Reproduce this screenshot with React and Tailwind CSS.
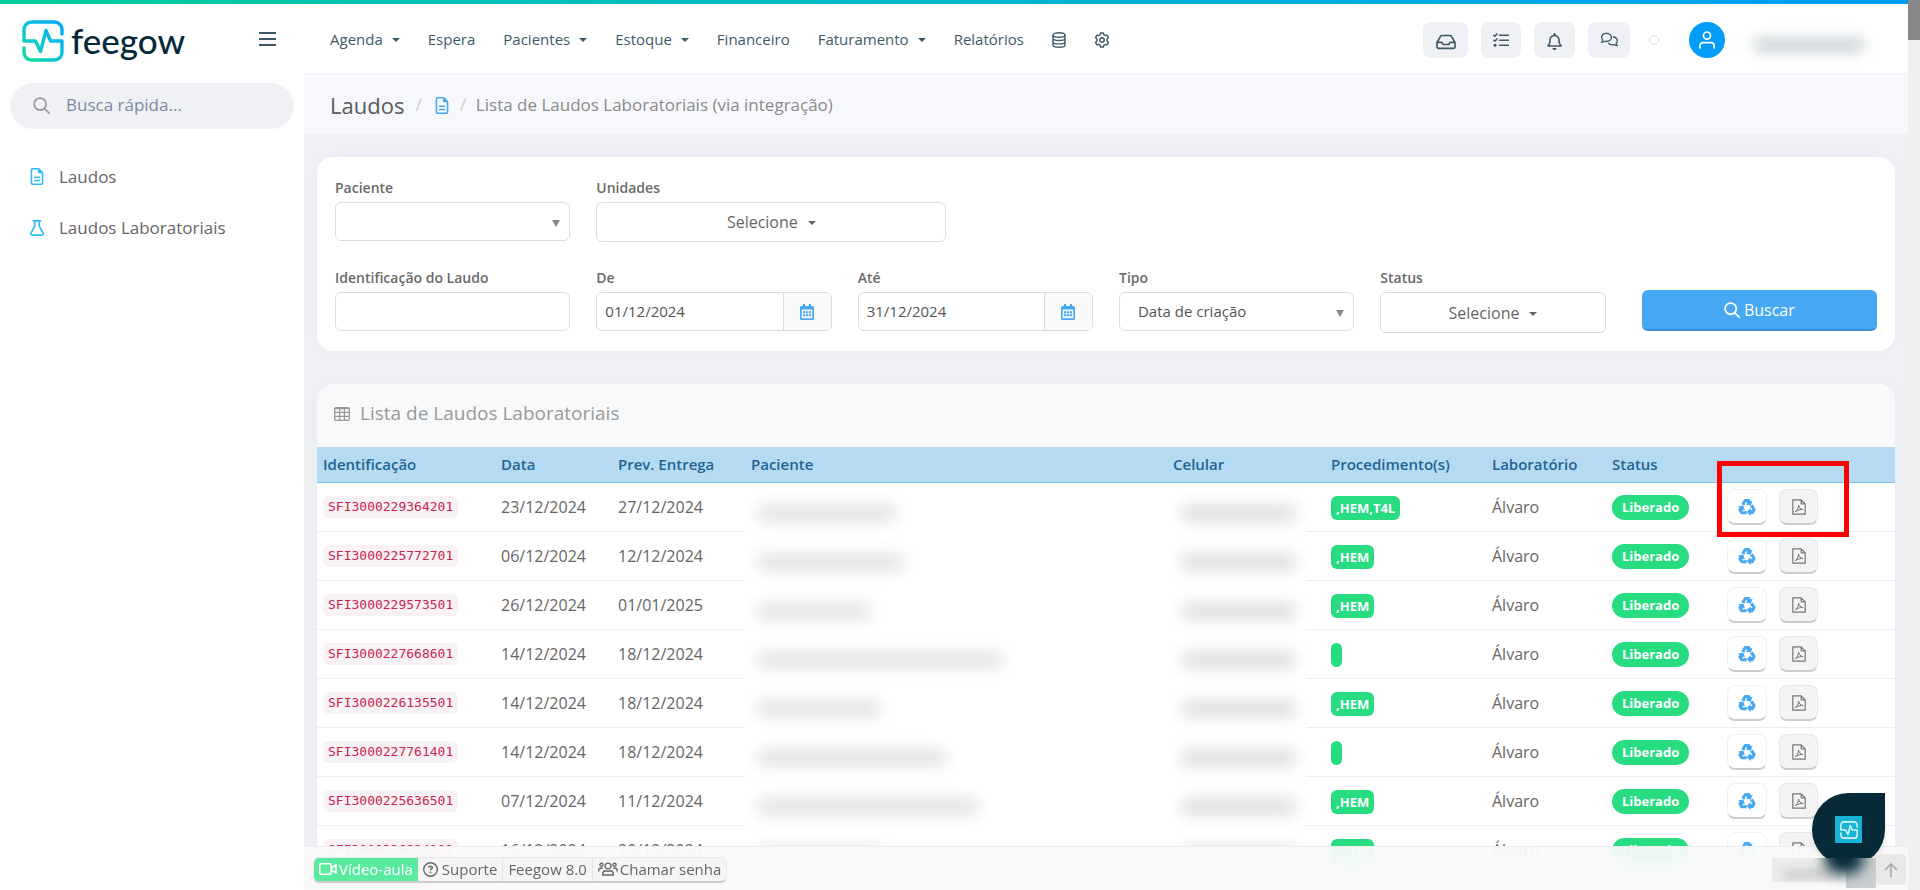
import { FaRegFileLines, FaRegBell, FaRegComments, FaRegCircleQuestion } from 'react-icons/fa6';

const menu = [
  { label: 'Agenda', caret: true },
  { label: 'Espera' },
  { label: 'Pacientes', caret: true },
  { label: 'Estoque', caret: true },
  { label: 'Financeiro' },
  { label: 'Faturamento', caret: true },
  { label: 'Relatórios' },
];

const laudos = [
  { id: 'SFI3000229364201', data: '23/12/2024', entrega: '27/12/2024', nome: 140, proc: ',HEM,T4L' },
  { id: 'SFI3000225772701', data: '06/12/2024', entrega: '12/12/2024', nome: 148, proc: ',HEM' },
  { id: 'SFI3000229573501', data: '26/12/2024', entrega: '01/01/2025', nome: 114, proc: ',HEM' },
  { id: 'SFI3000227668601', data: '14/12/2024', entrega: '18/12/2024', nome: 246, proc: '' },
  { id: 'SFI3000226135501', data: '14/12/2024', entrega: '18/12/2024', nome: 124, proc: ',HEM' },
  { id: 'SFI3000227761401', data: '14/12/2024', entrega: '18/12/2024', nome: 190, proc: '' },
  { id: 'SFI3000225636501', data: '07/12/2024', entrega: '11/12/2024', nome: 222, proc: ',HEM' },
  { id: 'SFI3000226924101', data: '16/12/2024', entrega: '20/12/2024', nome: 130, proc: ',HEM' },
];

function Caret({ className = '' }) {
  return (
    <svg viewBox="0 0 8 4" className={`h-1 w-2 fill-current ${className}`}>
      <path d="M0 0h8L4 4z" />
    </svg>
  );
}

function PulseMark({ className, stroke, width = 3.4 }) {
  return (
    <svg viewBox="0 0 42 42" className={className} fill="none" stroke={stroke} strokeWidth={width} strokeLinecap="round" strokeLinejoin="round">
      <defs>
        <linearGradient id="marca" x1="0" y1="1" x2="1" y2="0">
          <stop offset="0" stopColor="#10dc9c" />
          <stop offset="0.5" stopColor="#0cc4dc" />
          <stop offset="1" stopColor="#00a8fc" />
        </linearGradient>
      </defs>
      <path d="M40 14V9.500A7.500 7.500 0 0 0 32.500 2h-23A7.500 7.500 0 0 0 2 9.500V21h11.500l5 10.500L24 10.500l4.500 10.500H40v11.500a7.500 7.500 0 0 1-7.500 7.500h-23A7.500 7.500 0 0 1 2 32.500V28" />
    </svg>
  );
}

function SearchIcon({ className, width = 2 }) {
  return (
    <svg viewBox="0 0 18 18" className={className} fill="none" stroke="currentColor" strokeWidth={width} strokeLinecap="round">
      <circle cx="7.500" cy="7.500" r="6.300" />
      <path d="M12.200 12.200 17 17" />
    </svg>
  );
}

function FlaskIcon({ className }) {
  return (
    <svg viewBox="0 0 14 16" className={className} fill="none" stroke="currentColor" strokeWidth="1.600" strokeLinecap="round" strokeLinejoin="round">
      <path d="M3.300.9h7.400M4.700 1v5.200L1 13c-.5 1.100 0 2.100 1.100 2.100h9.800c1.100 0 1.600-1 1.100-2.100L9.300 6.200V1" />
    </svg>
  );
}

function DatabaseIcon() {
  return (
    <svg viewBox="0 0 14 16" className="h-4 w-3.5" fill="none" stroke="currentColor" strokeWidth="1.400">
      <ellipse cx="7" cy="3" rx="6" ry="2.200" />
      <path d="M1 3v10c0 1.200 2.700 2.200 6 2.200s6-1 6-2.200V3M1 6.300c0 1.200 2.700 2.200 6 2.200s6-1 6-2.200M1 9.700c0 1.200 2.700 2.200 6 2.200s6-1 6-2.200" />
    </svg>
  );
}

function GearIcon() {
  return (
    <svg viewBox="0 0 16 16" className="size-4" fill="none" stroke="currentColor" strokeWidth="1.400" strokeLinejoin="round">
      <path d="M6.600 1h2.800l.5 1.900 1.300.8 1.900-.6 1.400 2.500L13.100 7v2l1.400 1.400-1.400 2.500-1.900-.6-1.300.8-.5 1.900H6.600l-.5-1.900-1.300-.8-1.900.6-1.400-2.500L2.900 9V7L1.500 5.600l1.400-2.500 1.900.6 1.300-.8z" />
      <circle cx="8" cy="8" r="2.200" />
    </svg>
  );
}

function InboxIcon() {
  return (
    <svg viewBox="0 0 20 16" className="h-4 w-5" fill="none" stroke="currentColor" strokeWidth="1.700" strokeLinejoin="round">
      <path d="M1 8.500 4.500 2.300C4.800 1.700 5.300 1.500 6 1.500h8c.7 0 1.200.2 1.500.8L19 8.500v4.300c0 .9-.6 1.500-1.500 1.500h-15C1.600 14.300 1 13.700 1 12.800zM1.200 8.300h4.600L7.300 10.500h5.400l1.500-2.200h4.600" />
    </svg>
  );
}

function ChecklistIcon() {
  return (
    <svg viewBox="0 0 16 14" className="h-3.5 w-4" fill="none" stroke="currentColor" strokeWidth="1.500" strokeLinecap="round" strokeLinejoin="round">
      <path d="M6.500 2.300h9M6.500 7.300h9M6.500 12.300h9M.8 2.300l1.100 1 2-2.400M.8 7.300l1.100 1 2-2.400" />
      <circle cx="2" cy="12.300" r=".8" fill="currentColor" />
    </svg>
  );
}

function CalendarIcon() {
  return (
    <svg viewBox="0 0 14 16" className="h-4 w-3.5" fill="none">
      <path d="M4 0v3M10 0v3" stroke="currentColor" strokeWidth="2" />
      <path d="M0 3.500A1.500 1.500 0 0 1 1.500 2h11A1.500 1.500 0 0 1 14 3.500v11a1.500 1.500 0 0 1-1.500 1.500h-11A1.500 1.500 0 0 1 0 14.500zM1.700 5.500v8.800h10.600V5.500z" fill="currentColor" fillRule="evenodd" />
      <path d="M3 8.300h8M3 11.300h8" stroke="currentColor" strokeWidth="2" strokeDasharray="2.200 .7" />
    </svg>
  );
}

function TableIcon() {
  return (
    <svg viewBox="0 0 16 14" className="h-3.5 w-4" fill="none" stroke="currentColor" strokeWidth="1.300">
      <rect x=".7" y=".7" width="14.600" height="12.600" rx="1.200" />
      <path d="M.7 1.500h14.600M.7 5.300h14.600M.7 9.300h14.600M5.600 1v12M10.400 1v12" />
    </svg>
  );
}

// three chunky arrows, one drawn and turned twice
function RecycleIcon() {
  return (
    <svg viewBox="0 0 16 16" className="size-[18px] fill-current">
      {[0, 120, 240].map((turn) => (
        <path key={turn} transform={`rotate(${turn} 8 8.600)`} d="M3 5.400 5.200 1.700C5.500 1.200 6 .9 6.700.9h2.700c.6 0 1 .2 1.300.7l.8 1.400 1.500-.8-1.600 4.500-4.700-.9 1.500-.9L7.200 3.200 5.600 6.900z" />
      ))}
    </svg>
  );
}

function PdfIcon() {
  return (
    <svg viewBox="0 0 14 16" className="h-4 w-3.5" fill="none" stroke="currentColor" strokeWidth="1.200" strokeLinejoin="round">
      <path d="M.8.800h8.400l4 4v10.400H.8zM9.200.800v4h4" />
      <path strokeWidth="1" d="M3.100 12.700c1.800-1 3.400-3.600 3.500-6.700.3 2.400 1.800 4.300 4.500 4.600-2.600-.3-5.400.4-8 2.100z" />
    </svg>
  );
}

function VideoIcon() {
  return (
    <svg viewBox="0 0 18 12" className="h-3 w-[18px]" fill="none" stroke="currentColor" strokeWidth="1.600" strokeLinejoin="round">
      <rect x=".8" y=".8" width="11.400" height="10.400" rx="1" />
      <path d="M12.500 5 17 1.800v8.400L12.500 7z" />
    </svg>
  );
}

function GroupIcon() {
  return (
    <svg viewBox="0 0 20 14" className="h-3.5 w-5" fill="none" stroke="currentColor" strokeWidth="1.400" strokeLinecap="round">
      <circle cx="10" cy="4" r="2.900" />
      <circle cx="3.500" cy="2.800" r="1.600" />
      <circle cx="16.500" cy="2.800" r="1.600" />
      <path d="M4.800 13v-1c0-2 1.400-3.200 3-3.200.8 0 1.200.4 2.200.4s1.400-.4 2.200-.4c1.600 0 3 1.200 3 3.200v1zM.8 9V7.800C.8 6.700 1.600 6.200 2.500 6.200h1.700M19.200 9V7.800c0-1.100-.8-1.600-1.700-1.600h-1.700" />
    </svg>
  );
}

function Sidebar() {
  return (
    <aside className="w-76 shrink-0 bg-white pt-1">
      <div className="flex h-[79px] items-start pt-4 pr-7 pl-[22px]">
        <PulseMark className="size-[42px]" stroke="url(#marca)" />
        <span className="mt-0.5 ml-[7px] font-['Lato'] text-[35px] leading-9 font-medium text-[#06293a]">feegow</span>
        <button aria-label="Menu" className="mt-3 ml-auto flex w-[17px] flex-col gap-1 text-[#3e5a68]">
          <span className="h-0.5 bg-current" />
          <span className="h-0.5 bg-current" />
          <span className="h-0.5 bg-current" />
        </button>
      </div>
      <label className="mx-2.5 flex h-[46px] items-center gap-4 rounded-full bg-[#f0f1f5] pb-0.5 pl-[23px] text-[#999]">
        <SearchIcon className="size-[17px] shrink-0" width={1.8} />
        <input
          type="text"
          aria-label="Busca rápida"
          placeholder="Busca rápida..."
          className="min-w-0 flex-1 bg-transparent text-[17px] outline-none placeholder:text-[#7a8ba6]"
        />
      </label>
      <nav className="mt-[22px] text-[17px] text-[#666]">
        <a href="#laudos" className="flex h-[51px] items-center gap-[15px] pl-[30px]">
          <FaRegFileLines className="w-3.5 text-[#2fbcfb]" />
          Laudos
        </a>
        <a href="#laboratoriais" className="flex h-[51px] items-center gap-[15px] pl-[30px]">
          <FlaskIcon className="h-4 w-3.5 text-[#2fbcfb]" />
          Laudos Laboratoriais
        </a>
      </nav>
    </aside>
  );
}

function Topbar() {
  return (
    <header className="flex h-[69px] shrink-0 items-center bg-white pt-0.5 pr-[43px] pl-[26px] text-[#3e5a68]">
      <nav className="flex items-center gap-7 text-[15px]">
        {menu.map((item) => (
          <a key={item.label} href="#menu" className="flex items-center gap-[9px]">
            {item.label}
            {item.caret && <Caret />}
          </a>
        ))}
        <a href="#base" aria-label="Base"><DatabaseIcon /></a>
        <a href="#config" aria-label="Configurações"><GearIcon /></a>
      </nav>
      <div className="ml-auto flex items-center">
        <div className="flex gap-[13px]">
          <button aria-label="Caixa" className="flex h-9 w-[45px] items-center justify-center rounded-lg bg-[#f0f1f5] pt-1"><InboxIcon /></button>
          <button aria-label="Tarefas" className="flex h-9 w-10 items-center justify-center rounded-lg bg-[#f0f1f5]"><ChecklistIcon /></button>
          <button aria-label="Avisos" className="flex h-9 w-[41px] items-center justify-center rounded-lg bg-[#f0f1f5] pt-1 text-[17px]"><FaRegBell /></button>
          <button aria-label="Chat" className="flex h-9 w-[42px] items-center justify-center rounded-lg bg-[#f0f1f5] text-[17px]"><FaRegComments /></button>
        </div>
        <span className="ml-[19px] size-2.5 rounded-full border border-[#ddd]" />
        <button aria-label="Usuário" className="ml-[30px] flex size-9 items-center justify-center rounded-full bg-[#009cf8] text-white">
          <svg viewBox="0 0 18 20" className="h-5 w-4" fill="none" stroke="currentColor" strokeWidth="1.900" strokeLinecap="round">
            <circle cx="9" cy="5" r="4" />
            <path d="M1 19v-2.500A3.500 3.500 0 0 1 4.500 13h9a3.500 3.500 0 0 1 3.500 3.500V19" />
          </svg>
        </button>
        <span className="mt-2.5 ml-7 h-4 w-[112px] rounded-full bg-[#3e5a68]/25 blur-[7px]" />
      </div>
    </header>
  );
}

const campo = 'w-full rounded-md border border-[#ddd] bg-white';

function Campo({ id, label, className = '', children }) {
  return (
    <div className={className}>
      <label htmlFor={id} className="mb-1 block text-sm leading-5 font-semibold text-[#6a6a6a]">{label}</label>
      {children}
    </div>
  );
}

function Lista({ id, children }) {
  return (
    <div className="relative">
      <select id={id} className={`${campo} h-[39px] appearance-none pl-[18px] text-[15px] text-[#555]`}>
        {children}
      </select>
      <svg viewBox="0 0 8 7" className="pointer-events-none absolute top-[18px] right-2.5 h-[7px] w-2 fill-[#888]">
        <path d="M0 0h8L4 7z" />
      </svg>
    </div>
  );
}

function Multi({ id, className }) {
  return (
    <button id={id} className={`flex items-center justify-center gap-2.5 rounded-md border border-[#ddd] bg-white text-base text-[#666] ${className}`}>
      Selecione
      <Caret className="mt-0.5" />
    </button>
  );
}

function CampoData({ id, value }) {
  return (
    <div className="flex h-[39px] overflow-hidden rounded-md border border-[#ddd]">
      <input id={id} type="text" defaultValue={value} className="min-w-0 flex-1 px-2 text-[15px] text-[#555] outline-none" />
      <button aria-label="Abrir calendário" className="flex w-12 items-center justify-center border-l border-[#ddd] bg-[#fafafa] text-[#46a8f4]">
        <CalendarIcon />
      </button>
    </div>
  );
}

function Filtros() {
  return (
    <form className="grid grid-cols-6 gap-x-[26px] rounded-2xl bg-white px-[18px] pt-[21px] pb-[18px] shadow-[0_0_16px_rgba(40,50,90,0.03)]">
      <Campo id="paciente" label="Paciente">
        <Lista id="paciente"><option></option></Lista>
      </Campo>
      <Campo id="unidades" label="Unidades" className="col-span-5">
        <Multi id="unidades" className="h-10 w-[350px]" />
      </Campo>
      <div className="col-span-6 h-[26px]" />
      <Campo id="ident" label="Identificação do Laudo">
        <input id="ident" type="text" className={`${campo} h-[39px] px-2 text-[15px]`} />
      </Campo>
      <Campo id="de" label="De"><CampoData id="de" value="01/12/2024" /></Campo>
      <Campo id="ate" label="Até"><CampoData id="ate" value="31/12/2024" /></Campo>
      <Campo id="tipo" label="Tipo">
        <Lista id="tipo"><option>Data de criação</option></Lista>
      </Campo>
      <Campo id="status" label="Status" className="pr-2.5"><Multi id="status" className="h-[41px] w-full" /></Campo>
      <button type="button" className="mt-[22px] flex h-[41px] items-center justify-center gap-1 rounded-md border-b-2 border-[#3a92d6] bg-[#46a8f2] text-base text-white">
        <SearchIcon className="size-4" />
        Buscar
      </button>
    </form>
  );
}

function Tabela() {
  return (
    <section className="relative mt-[33px] rounded-t-2xl bg-white shadow-[0_0_16px_rgba(40,50,90,0.03)]">
      <h2 className="flex h-[63px] items-center gap-2.5 rounded-t-2xl bg-[#f8f9fb] pb-1 pl-[17px] text-[19px] text-[#999]">
        <TableIcon />
        Lista de Laudos Laboratoriais
      </h2>
      <table className="w-full table-fixed border-separate border-spacing-0 text-base text-[#666]">
        <colgroup>
          <col className="w-[178px]" />
          <col className="w-[117px]" />
          <col className="w-[133px]" />
          <col />
          <col className="w-[139px]" />
          <col className="w-[180px]" />
          <col className="w-[120px]" />
          <col className="w-[115px]" />
          <col className="w-[174px]" />
        </colgroup>
        <thead>
          <tr className="h-9 bg-[#b5daf2] text-left text-[15px] text-[#1f6496] [&>th]:border-b [&>th]:border-[#7cbce8] [&>th]:px-1.5 [&>th]:font-semibold">
            <th>Identificação</th>
            <th>Data</th>
            <th>Prev. Entrega</th>
            <th>Paciente</th>
            <th>Celular</th>
            <th><span className="pl-[19px]">Procedimento(s)</span></th>
            <th>Laboratório</th>
            <th>Status</th>
            <th aria-label="Ações" />
          </tr>
        </thead>
        <tbody>
          {laudos.map((l) => (
            <tr key={l.id} className="h-[49px] [&>td]:border-b [&>td]:border-[#eee] [&>td]:px-1.5">
              <td>
                <code className="block h-[22px] w-[135px] rounded-md bg-[#f9f2f4] px-[5px] font-['DejaVu_Sans_Mono',monospace] text-[13px] leading-[22px] text-[#c7254e]">{l.id}</code>
              </td>
              <td>{l.data}</td>
              <td>{l.entrega}</td>
              <td className="border-white!">
                <div className="mt-3 ml-1.5 h-4 rounded-full bg-black/12 blur-[8px]" style={{ width: l.nome }} />
              </td>
              <td className="border-white!">
                <div className="mt-3 ml-2 h-4 w-[116px] rounded-full bg-black/14 blur-[8px]" />
              </td>
              <td>
                <span className="ml-[19px] inline-block h-6 min-w-[11px] rounded-md bg-[#28dc82] px-[5px] align-middle text-[13px] leading-6 font-bold text-white">{l.proc}</span>
              </td>
              <td>Álvaro</td>
              <td>
                <span className="inline-block h-[25px] rounded-full bg-[#28dc82] px-2.5 align-middle text-[13px] leading-[25px] font-bold text-white">Liberado</span>
              </td>
              <td>
                <div className="flex gap-3">
                  <button aria-label="Sincronizar" className="flex h-9 w-10 items-center justify-center rounded-lg border border-b-2 border-[#f1f1f1] border-b-[#ccc] bg-white text-[#46a8f4]"><RecycleIcon /></button>
                  <button aria-label="Abrir PDF" className="flex h-9 w-[39px] items-center justify-center rounded-lg border border-b-2 border-[#e6e6e6] border-b-[#ccc] bg-[#f4f4f4] text-[#777]"><PdfIcon /></button>
                </div>
              </td>
            </tr>
          ))}
        </tbody>
      </table>
      <div className="absolute top-[77px] right-[46px] h-[76px] w-[132px] border-5 border-[#ff0000]" />
    </section>
  );
}

function Rodape() {
  return (
    <footer className="absolute inset-x-0 bottom-0 flex h-11 items-center border-t border-[#eee] bg-[#f9f9f9]/90 pt-0.5 pl-[9px] text-[15px] text-[#666] backdrop-blur-md">
      <div className="flex h-[26px] overflow-hidden rounded-md border border-b-2 border-[#eaeaea] border-b-[#ccc] bg-[#f5f5f5] [&>button]:px-[5px]">
        <button className="flex items-center gap-0.5 bg-[#5aeba0] text-white"><VideoIcon />Vídeo-aula</button>
        <button className="flex items-center gap-1 border-r border-[#e4e4e4]"><FaRegCircleQuestion />Suporte</button>
        <button className="flex items-center border-r border-[#e4e4e4]">Feegow 8.0</button>
        <button className="flex items-center gap-0.5"><GroupIcon />Chamar senha</button>
      </div>
      <button aria-label="Voltar ao topo" className="mr-0.5 ml-auto flex h-[31px] w-[30px] items-center justify-center rounded bg-[#e8e8e8] text-[#aaa]">
        <svg viewBox="0 0 14 14" className="size-3.5" fill="none" stroke="currentColor" strokeWidth="1.600">
          <path d="M7 14V1M1 7l6-6 6 6" />
        </svg>
      </button>
    </footer>
  );
}

function Chat() {
  return (
    <>
      <button aria-label="Chat Feegow" className="absolute right-[23px] bottom-6 flex size-[73px] items-center justify-center rounded-full rounded-tr-lg bg-[#062a38] shadow-md">
        <span className="flex size-[27px] items-center justify-center bg-[#17b3d4]">
          <PulseMark className="size-[18px]" stroke="#d6f2f8" width={3.6} />
        </span>
      </button>
      <div className="absolute right-8 bottom-0 h-8 w-26 overflow-hidden">
        <div className="h-6 w-20 bg-[#e9e9e9]/80" />
        <div className="absolute top-0 right-0 h-[30px] w-[30px] bg-[#c9cfd2]" />
        <div className="absolute -top-4 right-3 h-8 w-10 rounded-full bg-[#062a38] blur-[7px]" />
        <div className="absolute top-3 left-3 h-2 w-12 bg-black/15 blur-[5px]" />
      </div>
    </>
  );
}

export default function App() {
  return (
    <div className="relative flex h-screen overflow-hidden bg-[#f0f1f5] font-['Open_Sans',sans-serif]">
      <Sidebar />
      <main className="relative flex min-w-0 flex-1 flex-col overflow-hidden pt-1">
        <Topbar />
        <div className="flex h-[62px] shrink-0 items-center border-y border-[#f2f3f5] bg-[#f7f8fb] pt-0.5 pl-[26px] text-[17px] text-[#8a8a8a]">
          <h1 className="text-[22px] text-[#5a5a5a]">Laudos</h1>
          <span className="ml-[11px] text-[#ccc]">/</span>
          <FaRegFileLines className="mr-2.5 ml-3 w-4 text-[#46a8f4]" />
          <span className="text-[#ccc]">/</span>
          <span className="ml-2.5">Lista de Laudos Laboratoriais (via integração)</span>
        </div>
        <div className="px-[13px] pt-[22px]">
          <Filtros />
          <Tabela />
        </div>
        <Rodape />
        <Chat />
      </main>
      <div className="w-3 shrink-0 bg-[#f0f0f0]">
        <div className="h-10 bg-[#888]" />
      </div>
      <div className="absolute top-0 right-3 left-0 h-1 bg-linear-to-r from-[#00cc9c] to-[#009cf8]" />
    </div>
  );
}
